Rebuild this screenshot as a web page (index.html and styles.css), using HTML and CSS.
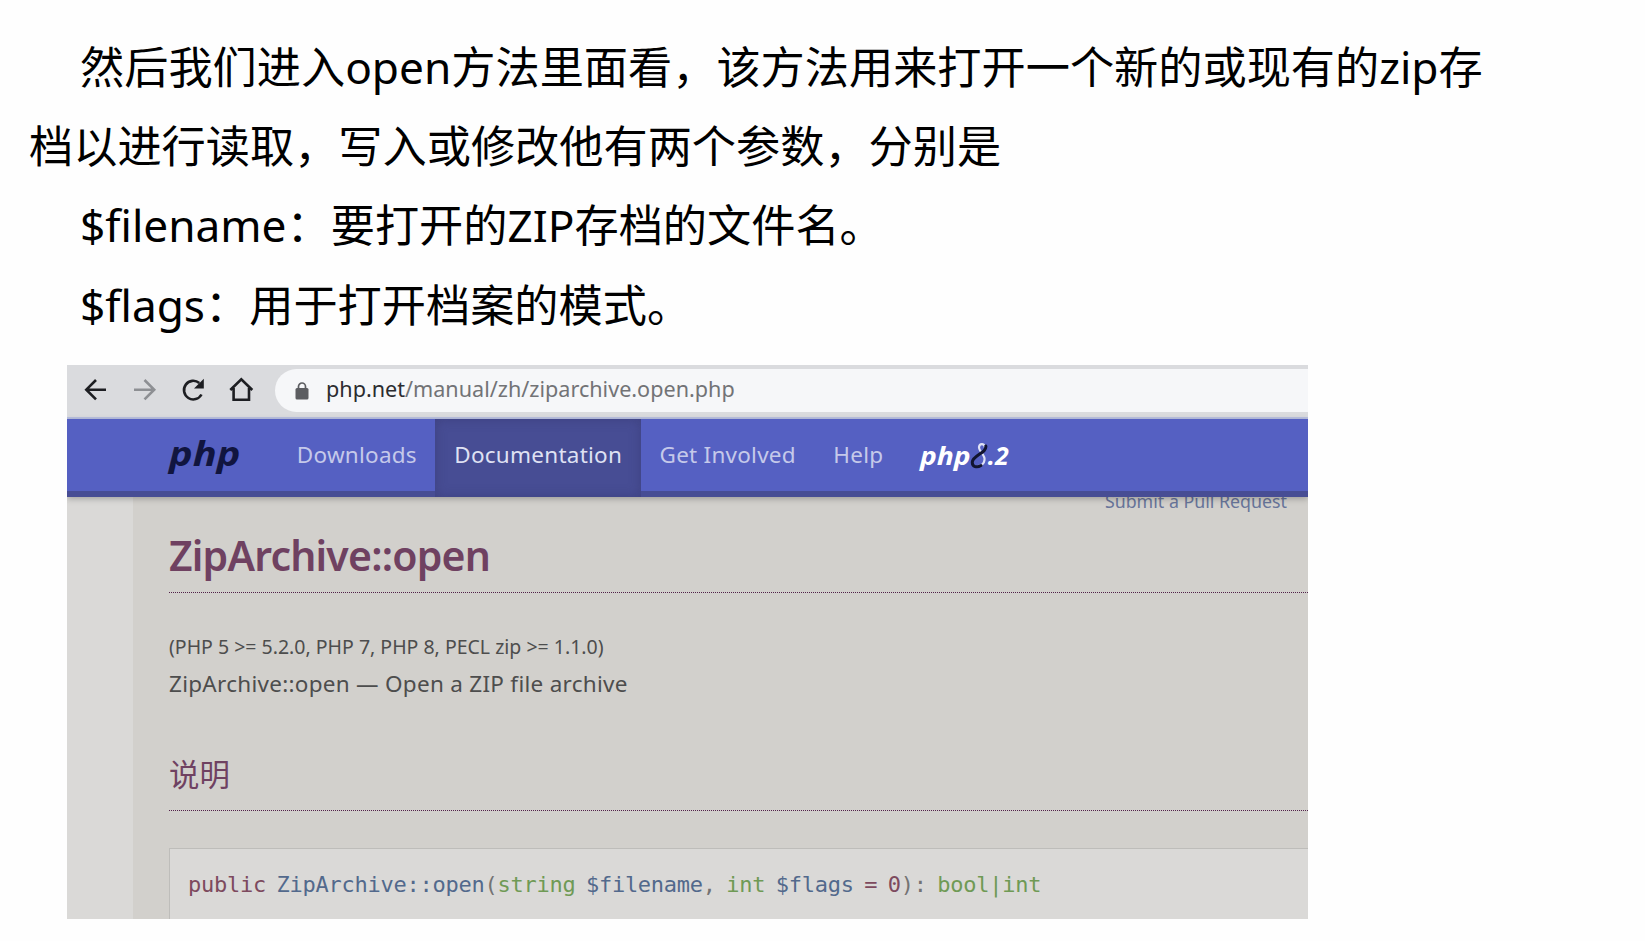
FILE: index.html
```html
<!DOCTYPE html>
<html lang="zh-CN">
<head>
  <meta charset="UTF-8" />
  <meta name="viewport" content="width=device-width, initial-scale=1.0"/>
  <title>ZipArchive::open</title>
  <link rel="stylesheet" href="styles.css">
</head>
<body>
  <div class="intro">
    <p>然后我们进入open方法里面看，该方法用来打开一个新的或现有的zip存<br>档以进行读取，写入或修改他有两个参数，分别是</p>
    <p>$filename：要打开的ZIP存档的文件名。</p>
    <p>$flags：用于打开档案的模式。</p>
  </div>

  <div class="browser">
    <div class="toolbar">
      <svg class="tool-icons" width="200" height="50" viewBox="0 0 200 50" fill="none" stroke="#1d1e22" stroke-width="2.6">
        <path d="M39 24.700H19.500M29 15L19.300 24.700L29 34.400"/>
        <path stroke="#8d8f93" d="M67 24.700H87M77.500 15L87.200 24.700L77.500 34.400"/>
        <path d="M134.500 29.500A9.300 9.300 0 1 1 132.300 18"/>
        <path fill="#1d1e22" stroke="none" d="M136.800 13.800V23.600H127Z"/>
        <path d="M163.300 25L174.300 14.300L185.300 25M166.600 23V34.700H182V23"/>
      </svg>
      <div class="address">
        <svg class="lock" width="14" height="18" viewBox="0 0 14 18">
          <rect x="0.500" y="6" width="13" height="11.500" rx="1.500" fill="#5c5d61"/>
          <path d="M3.500 7V4.500a3.500 3.500 0 0 1 7 0V7" fill="none" stroke="#5c5d61" stroke-width="1.700"/>
        </svg>
        <span class="url"><b>php.net</b>/manual/zh/ziparchive.open.php</span>
      </div>
    </div>

    <nav class="navbar">
      <a class="brand">php</a>
      <a class="nav-item">Downloads</a>
      <a class="nav-item active">Documentation</a>
      <a class="nav-item">Get Involved</a>
      <a class="nav-item">Help</a>
      <a class="release"><span class="word">php</span><svg width="18" height="27" viewBox="0 0 18 27" fill="none" stroke-linecap="round">
          <path d="M15 6C15 1 9.500 1 9 5C8.500 9 15.500 13 14.500 18C14 22 11 24 8 24" stroke="#dfe2f5" stroke-width="2.200"/>
          <path d="M15.800 4C17 11 3 13 2.300 20C2 25 7 26 11 23.500" stroke="#11142f" stroke-width="3"/>
        </svg><span>.2</span></a>
    </nav>

    <div class="layout">
      <div class="side"></div>
      <div class="content">
        <div class="pull-request">Submit a Pull Request</div>
        <h1>ZipArchive::open</h1>
        <p class="verinfo">(PHP 5 &gt;= 5.2.0, PHP 7, PHP 8, PECL zip &gt;= 1.1.0)</p>
        <p class="purpose">ZipArchive::open — Open a ZIP file archive</p>
        <h3>说明</h3>
        <div class="synopsis"><span class="modifier">public</span> <span class="name">ZipArchive::open</span>(<span class="type">string</span> <span class="name">$filename</span>, <span class="type">int</span> <span class="name">$flags</span> <span class="modifier">= 0</span>): <span class="type">bool|int</span></div>
      </div>
    </div>
  </div>
</body>
</html>
```

FILE: styles.css
```css
* {
  box-sizing: border-box;
}

body {
  margin: 0;
  background: #fefefe;
  font-family: "Noto Sans", "Noto Sans CJK SC", sans-serif;
  height: 941px;
  overflow: hidden;
}

h1, h3, p {
  margin: 0;
  font-weight: 400;
}

.intro {
  padding: 28px 0 0 29px;
  height: 365px;
  font-size: 44.2px;
  line-height: 79.2px;
  color: #000;
  white-space: nowrap;
}

.intro p {
  text-indent: 51px;
}

.browser {
  width: 1241px;
  height: 554px;
  margin-left: 67px;
  overflow: hidden;
}

.toolbar {
  display: flex;
  height: 54px;
  background: #dadbde;
  border-bottom: 2px solid #b9c0e0;
}

.tool-icons {
  flex: none;
  margin-right: 8px;
}

.address {
  display: flex;
  align-items: center;
  flex: 1;
  height: 43px;
  margin-top: 4px;
  padding-left: 20px;
  background: #f6f7f9;
  border-radius: 22px 0 0 22px;
}

.url {
  margin-left: 17px;
  padding-bottom: 4px;
  font-size: 21.6px;
  line-height: 38px;
  color: #727376;
}

.url b {
  font-weight: 400;
  color: #2b2c30;
}

.navbar {
  position: relative;
  display: flex;
  height: 78px;
  padding-left: 102px;
  background: #5560c2;
  border-bottom: 6px solid #474d94;
  box-shadow: 0 2px 6px rgba(0, 0, 0, 0.25);
  line-height: 71px;
}

.brand {
  width: 109px;
  font-size: 34px;
  font-weight: 700;
  font-style: italic;
  line-height: 69px;
  color: #11153f;
  transform: scaleX(1.17);
  transform-origin: left;
}

.nav-item {
  padding: 0 18.6px 0 18.8px;
  font-size: 22.5px;
  letter-spacing: 0.25px;
  color: #c5c9ea;
}

.nav-item.active {
  height: 78px;
  background: #474d94;
  box-shadow: inset 0 0 12px rgba(50, 50, 100, 0.4);
  color: #dfe1f3;
}

.release {
  display: flex;
  align-items: center;
  padding-left: 18px;
  font-size: 25px;
  font-weight: 700;
  font-style: italic;
  color: #fff;
}

.release .word {
  margin-right: 5px;
  transform: scaleX(1.13);
  transform-origin: left;
}

.layout {
  display: flex;
  height: 422px;
}

.side {
  width: 66px;
  background: #dad9d7;
}

.content {
  flex: 1;
  padding-left: 36px;
  background: #d2d0cc;
  color: #4d4d4d;
}

.pull-request {
  height: 47px;
  margin-top: -14px;
  padding-right: 21px;
  font-size: 17.8px;
  line-height: 36px;
  text-align: right;
  color: #68759a;
}

h1 {
  height: 63px;
  border-bottom: 1px dotted #52214a;
  font-size: 41px;
  font-weight: 600;
  line-height: 50px;
  letter-spacing: -0.8px;
  color: #6f4161;
}

.verinfo {
  margin-top: 36px;
  font-size: 19.5px;
  line-height: 36px;
}

.purpose {
  font-size: 22.5px;
  line-height: 38px;
  letter-spacing: 0.28px;
}

h3 {
  height: 66px;
  margin-top: 42px;
  border-bottom: 1px dotted #52214a;
  font-size: 30.4px;
  line-height: 60px;
  color: #6f4161;
}

.synopsis {
  height: 80px;
  margin-top: 37px;
  padding-left: 18px;
  background: #dad9d7;
  border: 1px solid #bebdba;
  border-right: none;
  font-family: "DejaVu Sans Mono", monospace;
  font-size: 22px;
  line-height: 72px;
  letter-spacing: -0.25px;
  word-spacing: -2.5px;
  white-space: nowrap;
  color: #737373;
}

.modifier {
  color: #7d4a5e;
}

.name {
  color: #52698c;
}

.type {
  color: #6f9a55;
}
```
